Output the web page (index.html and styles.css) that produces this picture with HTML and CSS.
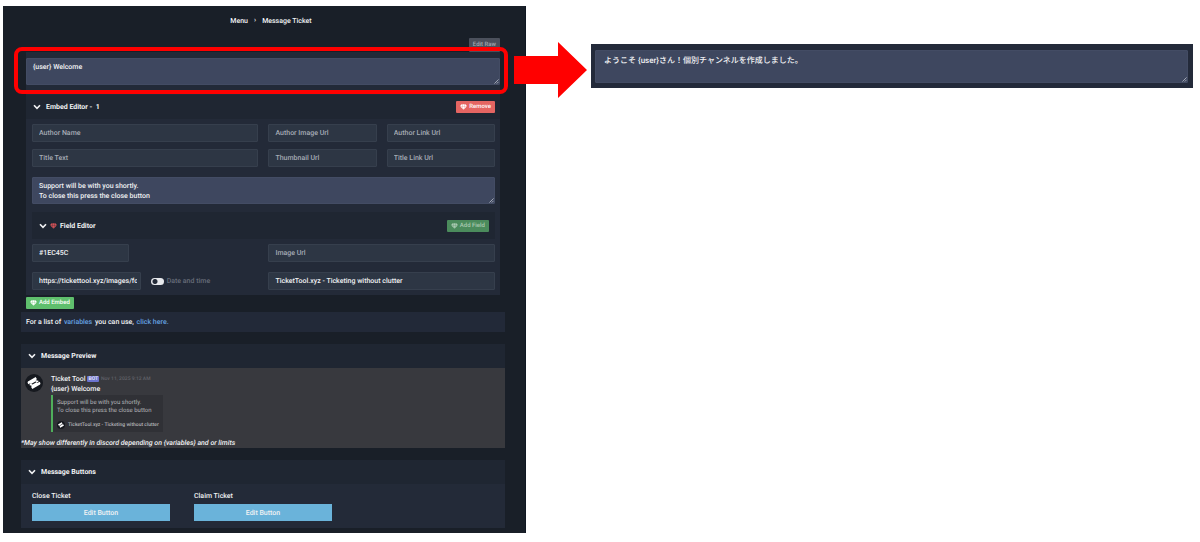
FILE: index.html
```
<!DOCTYPE html>
<html lang="en">
  <head>
    <meta charset="utf-8">
    <title>Message Ticket</title>
    <link rel="stylesheet" href="styles.css">
  </head>
  <body>

  <!-- shared icons -->
  <svg class="sprite" aria-hidden="true">
    <symbol id="chevron" viewBox="0 0 8 6">
      <path d="M1 1.2 L4 4.4 L7 1.2" fill="none" stroke="currentColor" stroke-width="1.6"/>
    </symbol>
    <symbol id="gem" viewBox="0 0 14 12">
      <path d="M3.2 0.3h2.2L4.2 3.8H0.2zM6 0.3h2l1.3 3.5H4.7zM8.6 0.3h2.2l3 3.5h-4zM0.3 4.3h3.9l2.2 6.8zM4.7 4.3h4.6L7 11.8zM9.8 4.3h3.9l-6.1 6.8z" fill="currentColor"/>
    </symbol>
    <symbol id="grip" viewBox="0 0 6 6">
      <path d="M0.5 5.5L5.5 0.5M3.3 5.5L5.5 3.3" fill="none" stroke="currentColor" stroke-width="0.9"/>
    </symbol>
    <symbol id="ticket" viewBox="0 0 18 18">
      <g transform="rotate(-30 9 9)">
        <path d="M4.5 4.6h9v2.6h-1.5v1.2H5.5V7.2H3.5V5.6zM5.5 9.6h6.5v1.2h2.5v1.6l-1 1H4.5v-2.6h1z" fill="#fff"/>
        <path d="M4.5 8.2L6.5 9.9M11.5 8.2L13.5 9.9" stroke="#fff" stroke-width="1.5"/>
      </g>
    </symbol>
  </svg>

  <main class="page">
    <div class="panel">
      <nav class="breadcrumb">
        <a href="#">Menu</a>
        <span class="sep">›</span>
        <a href="#">Message Ticket</a>
      </nav>

      <div class="editor">
        <div class="raw-row">
          <button class="btn btn-raw">Edit Raw</button>
        </div>

        <div class="message">
          <div class="textbox">
            <textarea aria-label="Message">{user} Welcome</textarea>
            <svg class="grip"><use href="#grip"/></svg>
          </div>
          <div class="highlight"></div>
          <svg class="arrow" viewBox="0 0 73 56"><path d="M0 14H44V0L73 28L44 56V42H0z" fill="#f00"/></svg>
        </div>

        <section class="embed">
          <header class="head">
            <svg class="chevron"><use href="#chevron"/></svg>
            <h2>Embed Editor -&nbsp; 1</h2>
            <button class="btn btn-remove"><svg class="gem"><use href="#gem"/></svg>Remove</button>
          </header>
          <div class="embed-body">
            <div class="fields">
              <input type="text" placeholder="Author Name" aria-label="Author Name">
              <input type="text" placeholder="Author Image Url" aria-label="Author Image Url">
              <input type="text" placeholder="Author Link Url" aria-label="Author Link Url">
              <input type="text" placeholder="Title Text" aria-label="Title Text">
              <input type="text" placeholder="Thumbnail Url" aria-label="Thumbnail Url">
              <input type="text" placeholder="Title Link Url" aria-label="Title Link Url">
            </div>
            <div class="textbox description">
              <textarea aria-label="Description">Support will be with you shortly.
To close this press the close button</textarea>
              <svg class="grip"><use href="#grip"/></svg>
            </div>
            <header class="head field-head">
              <svg class="chevron"><use href="#chevron"/></svg>
              <svg class="gem red"><use href="#gem"/></svg>
              <h2>Field Editor</h2>
              <button class="btn btn-field"><svg class="gem"><use href="#gem"/></svg>Add Field</button>
            </header>
            <div class="fields footer-fields">
              <div class="cell">
                <input class="color" type="text" value="#1EC45C" aria-label="Color">
              </div>
              <input class="wide" type="text" placeholder="Image Url" aria-label="Image Url">
              <div class="cell">
                <input class="icon-url" type="text" value="https://tickettool.xyz/images/footer.png" aria-label="Footer Icon Url">
                <label class="date"><input type="checkbox">Date and time</label>
              </div>
              <input class="wide" type="text" value="TicketTool.xyz - Ticketing without clutter" aria-label="Footer Text">
            </div>
          </div>
        </section>

        <button class="btn btn-embed"><svg class="gem"><use href="#gem"/></svg>Add Embed</button>
      </div>

      <p class="hint">For a list of <a href="#">variables</a> you can use, <a href="#">click here.</a></p>

      <section class="card">
        <header class="head">
          <svg class="chevron"><use href="#chevron"/></svg>
          <h2>Message Preview</h2>
        </header>
        <div class="preview">
          <div class="post">
            <svg class="avatar"><use href="#ticket"/></svg>
            <div>
              <div class="author">Ticket Tool <span class="bot">BOT</span> <time>Nov 11, 2025 9:12 AM</time></div>
              <div class="text">{user} Welcome</div>
              <div class="quote">
                <p>Support will be with you shortly.<br>To close this press the close button</p>
                <div class="quote-foot"><svg class="avatar small" viewBox="0 0 18 18"><use href="#ticket"/></svg>TicketTool.xyz - Ticketing without clutter</div>
              </div>
            </div>
          </div>
          <p class="note">*May show differently in discord depending on {variables} and or limits</p>
        </div>
      </section>

      <section class="card">
        <header class="head">
          <svg class="chevron"><use href="#chevron"/></svg>
          <h2>Message Buttons</h2>
        </header>
        <div class="buttons">
          <div>
            <h3>Close Ticket</h3>
            <button class="btn-edit">Edit Button</button>
          </div>
          <div>
            <h3>Claim Ticket</h3>
            <button class="btn-edit">Edit Button</button>
          </div>
        </div>
      </section>
    </div>

    <div class="result">
      <div class="textbox">
        <textarea aria-label="Translated message">ようこそ {user}さん！個別チャンネルを作成しました。</textarea>
        <svg class="grip"><use href="#grip"/></svg>
      </div>
    </div>
  </main>

  </body>
</html>
```
FILE: styles.css
```
* {
  box-sizing: border-box;
}

body {
  margin: 0;
  background: #fff;
  color: #f1f2f4;
  font-family: Roboto, "Noto Sans CJK JP", sans-serif;
  font-size: 7px;
  font-weight: 500;
  line-height: 10px;
  text-rendering: geometricPrecision;
}

h2, h3, p {
  margin: 0;
  font-size: 7px;
  font-weight: 500;
}

a {
  color: inherit;
  text-decoration: none;
}

input, textarea, button {
  margin: 0;
  color: inherit;
  font: inherit;
  text-rendering: inherit;
}

svg {
  flex: none;
}

.sprite {
  position: absolute;
  width: 0;
  height: 0;
}

.page {
  display: grid;
  grid-template-columns: 523fr 602fr;
  column-gap: 65px;
  align-items: start;
  padding: 6px 7px 8px 3px;
}

.panel {
  padding: 0 20px 5px 18px;
  background: #191f28;
  border-right: 1px solid #101722;
}

.breadcrumb {
  display: flex;
  justify-content: center;
  gap: 6px;
  padding: 10px 0 12px 16px;
}

.sep {
  line-height: 8px;
}

.editor {
  padding: 0 5px;
}

.raw-row {
  display: flex;
  justify-content: flex-end;
}

.btn {
  display: inline-flex;
  align-items: center;
  justify-content: center;
  gap: 2px;
  height: 12px;
  padding: 0 4px;
  border: 0;
  border-radius: 1px;
  color: #fff;
  font-size: 6px;
  cursor: pointer;
}

.btn-raw {
  height: 14px;
  background: #4b505c;
  color: #a4a8b0;
}

.btn-remove {
  margin-left: auto;
  background: #e56562;
}

.btn-field {
  margin-left: auto;
  background: #4b8b5c;
  color: #a9c9b1;
}

.btn-embed {
  margin-top: 2px;
  background: #5fbf6d;
}

.gem {
  width: 7px;
  height: 6px;
}

.gem.red {
  color: #d25257;
}

.chevron {
  width: 8px;
  height: 6px;
}

.textbox {
  position: relative;
}

.textbox textarea {
  display: block;
  width: 100%;
  height: 27px;
  padding: 3px 6px;
  border: 1px solid #434c64;
  border-radius: 1px;
  background: #3e475f;
  resize: none;
  overflow: hidden;
}

.grip {
  position: absolute;
  right: 1px;
  bottom: 1px;
  width: 5px;
  height: 5px;
  color: #c3c7d0;
}

.message {
  position: relative;
  padding: 6px 0 10px;
  background: #222a38;
}

/* callout frame and arrow lie over the panel */
.highlight {
  position: absolute;
  inset: -5px -8px 1px -12px;
  border: 4px solid #f00;
  border-radius: 8px;
}

.arrow {
  position: absolute;
  left: calc(100% + 14px);
  top: -10px;
  width: 73px;
  height: 56px;
}

.head {
  display: flex;
  align-items: center;
  gap: 5px;
  height: 24px;
  padding: 0 5px 0 7px;
  background: #1f2632;
}

.head h2 {
  font-weight: 700;
}

.embed {
  background: #232a38;
}

.embed-body {
  padding: 5px 5px 5px 6px;
}

.fields {
  display: grid;
  grid-template-columns: 23fr 11fr 11fr;
  gap: 7px 10px;
}

input[type="text"] {
  width: 100%;
  min-width: 0;
  height: 18px;
  padding: 0 6px;
  border: 1px solid #363f4d;
  border-radius: 1px;
  background: #2d3644;
}

input::placeholder {
  color: #a5abb5;
}

.description {
  margin: 10px 0 8px;
}

.field-head {
  gap: 3px;
  padding-right: 6px;
  height: 27px;
}

.footer-fields {
  row-gap: 10px;
  padding-top: 5px;
}

.cell {
  display: flex;
  align-items: center;
  gap: 10px;
}

.cell .color {
  width: 43%;
}

.cell .icon-url {
  width: 48%;
  padding-right: 3px;
}

.wide {
  grid-column: span 2;
}

.date {
  display: flex;
  align-items: center;
  gap: 3px;
  color: #666c78;
}

.date input {
  appearance: none;
  width: 13px;
  height: 7px;
  margin: 0;
  border-radius: 4px;
  background: radial-gradient(circle at 4px 50%, #232a38 2px, #e6e8ec 3px);
}

.hint {
  margin-top: 3px;
  padding: 5px;
  background: #222938;
}

.hint a {
  margin: 0 1px;
  color: #64a0e0;
}

.card {
  margin-top: 12px;
  background: #232a38;
}

.preview {
  padding: 6px 0 0;
  background: #38393e;
}

.post {
  display: flex;
  gap: 8px;
  padding-left: 4px;
}

.avatar {
  width: 18px;
  height: 18px;
  border-radius: 50%;
  background: #16191f;
}

.avatar.small {
  width: 8px;
  height: 8px;
}

.author {
  display: flex;
  align-items: center;
  gap: 2px;
}

.bot {
  padding: 0 1px;
  border-radius: 1px;
  background: #6b73cf;
  font-size: 5px;
  line-height: 6px;
}

.author time {
  color: #606168;
  font-size: 5px;
}

.quote {
  width: max-content;
  margin-top: 1px;
  padding: 4px 4px 2px;
  border-left: 2px solid #4fae5b;
  background: #303136;
  color: #b4b5b9;
  line-height: 8px;
}

.quote p {
  font-size: 6px;
  font-weight: 400;
}

.quote-foot {
  display: flex;
  align-items: center;
  gap: 3px;
  margin-top: 5px;
  line-height: 10px;
  font-size: 5px;
}

.note {
  margin-top: 6px;
  font-style: italic;
}

.buttons {
  display: grid;
  grid-template-columns: repeat(3, 1fr);
  gap: 24px;
  padding: 7px 11px;
}

.buttons h3 {
  margin-bottom: 3px;
}

.btn-edit {
  width: 100%;
  height: 17px;
  padding: 0;
  border: 0;
  background: #6ab3da;
  cursor: pointer;
}

.result {
  margin-top: 38px;
  padding: 6px 5px 5px 4px;
  background: #232a3a;
}

.result textarea {
  height: 33px;
  padding: 5px 8px;
  font-size: 8px;
}
```
